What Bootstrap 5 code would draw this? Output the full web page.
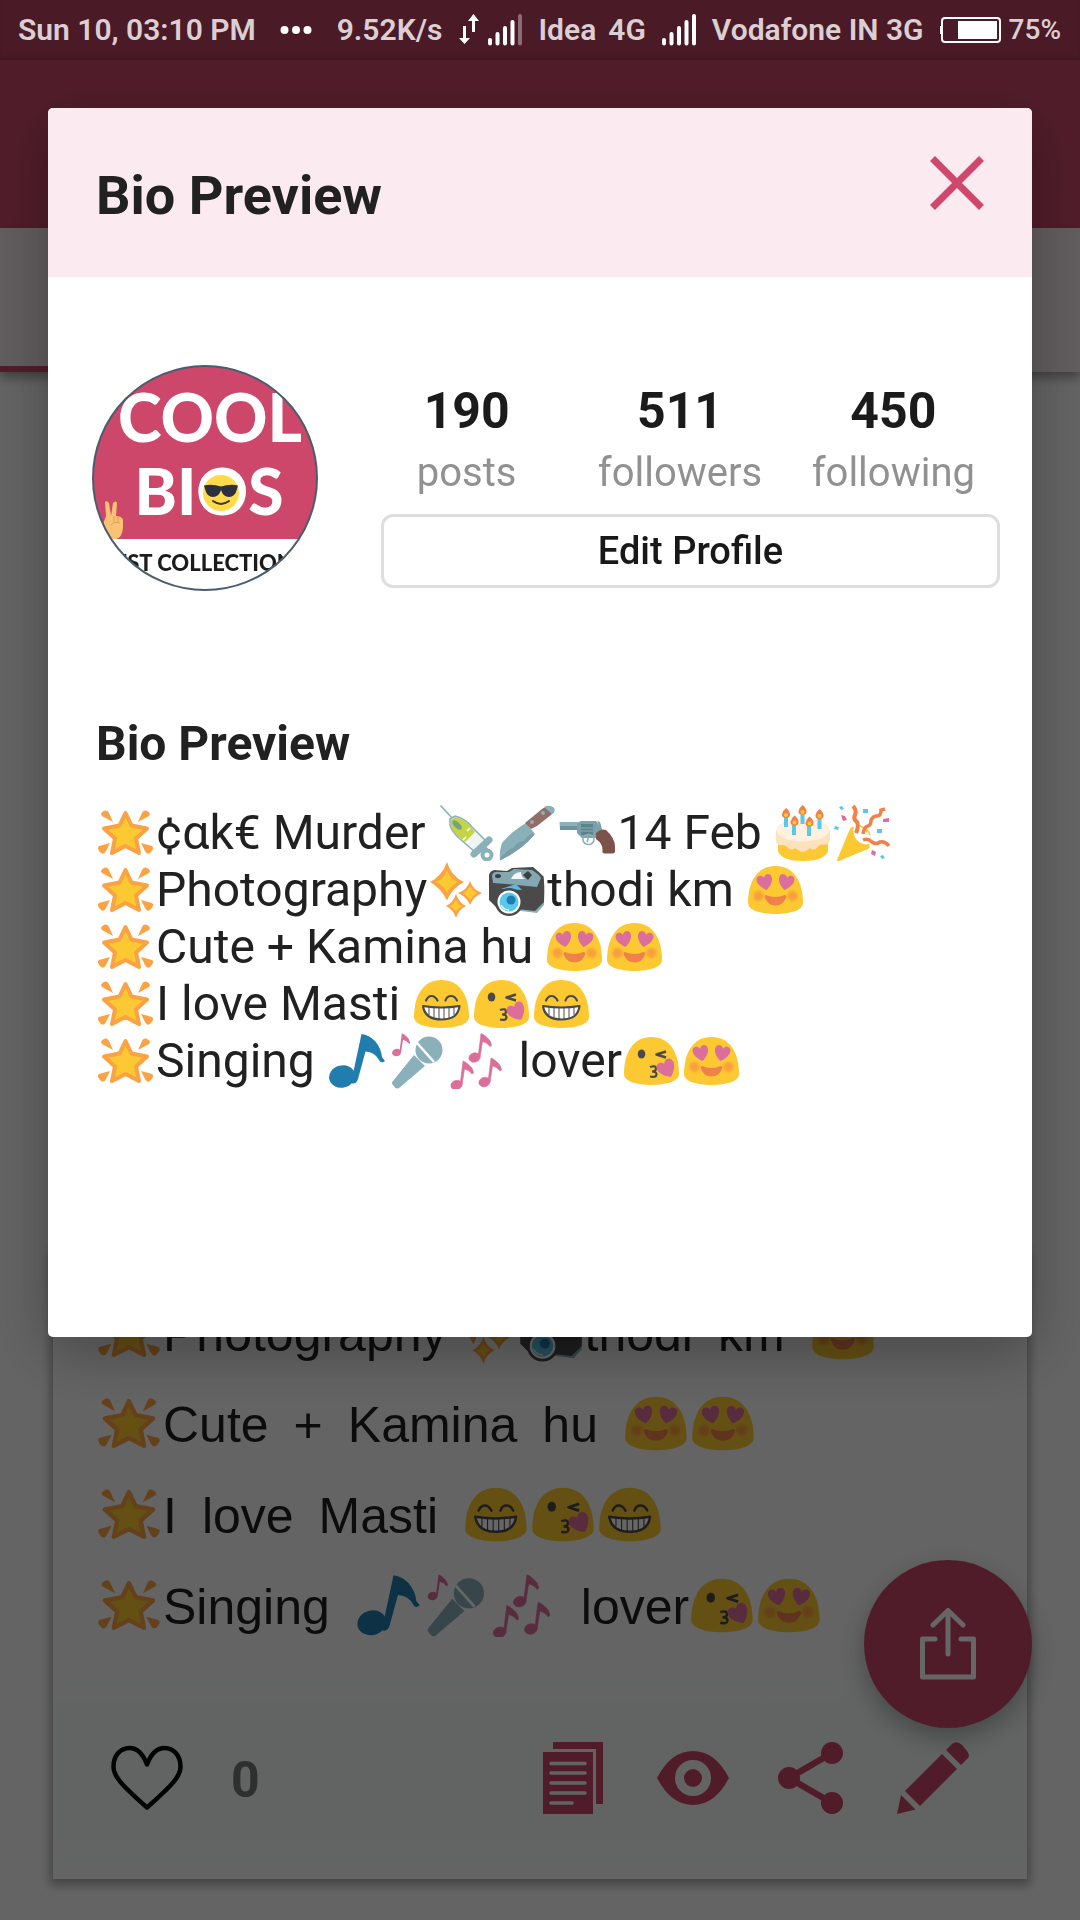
<!DOCTYPE html>
<html lang="en">
<head>
<meta charset="utf-8">
<meta name="viewport" content="width=device-width, initial-scale=1">
<title>Bio Preview</title>
<link href="https://cdn.jsdelivr.net/npm/bootstrap@5.3.0/dist/css/bootstrap.min.css" rel="stylesheet">
<style>
  :root { --brand: #cb486a; }
  body { font-family: Roboto, sans-serif; background: #fafafa; color: #212121; }
  .status-bar { position: relative; z-index: 1060; height: 60px; padding: 0 19px 0 18px; background: #4a1b26; color: #dccfd3;
    font-size: 30px; line-height: 60px; font-weight: 600; white-space: nowrap; box-shadow: inset 0 -3px 3px rgba(0,0,0,.15); }
  .status-bar .charge { font-size: 28px; font-weight: 500; }
  .app-bar { height: 168px; background: var(--brand); }
  .tab-strip { height: 144px; background: #f5e8ec; box-shadow: 0 6px 10px rgba(0,0,0,.35); }
  .tab-on { border-bottom: 6px solid var(--brand); }
  .bio-card { margin: 0 53px 41px; background: #fafafa; box-shadow: 0 3px 9px 3px rgba(0,0,0,.32); }
  .bio-lines { padding: 40px 43px 14px; font: 50px/91px "Liberation Sans", sans-serif; color: #1f1f1f; }
  .bio-foot { background: linear-gradient(#fafafa, #f6faf8 40px, #f6faf8 170px, #fafafa); padding: 75px 58px 63px; }
  .bio-foot .likes { font-size: 50px; line-height: 72px; font-weight: 700; color: #737575; padding-top: 2px; }
  .icon-btn { border: 0; background: none; padding: 0; color: var(--brand); line-height: 0; }
  .emo { width: 60px; height: 56px; vertical-align: -12px; }
  .bio-lines .emo { width: 67px; height: 63px; vertical-align: -13px; }
  .fab { position: absolute; right: 48px; bottom: 192px; width: 168px; height: 168px; background: var(--brand); box-shadow: 0 10px 24px rgba(40,50,60,.35); }
  .modal-backdrop.show { opacity: .6; }
  .preview-dialog { max-width: none; margin: 108px 48px 0; }
  .preview-dialog .modal-content { border: 0; border-radius: 5px; color: #212121; box-shadow: 0 14px 60px rgba(0,0,0,.3); overflow: visible; }
  .preview-dialog .modal-header { background: #fbebf0; border: 0; border-radius: 5px 5px 0 0; padding: 48px 48px 49px; }
  .preview-dialog .modal-title { font-size: 54px; line-height: 64px; font-weight: 700; padding-top: 8px; }
  .preview-dialog .modal-body { padding: 88px 32px 248px 44px; }
  .profile { gap: 42px; }
  .avatar { width: 226px; height: 226px; }
  .stat b { display: block; font-size: 50px; line-height: 60px; font-weight: 700; color: #1b1b1b; margin-bottom: 8px; }
  .stat span { display: block; font-size: 40px; line-height: 48px; color: #919191; }
  .edit-btn { margin: 17px 0 3px 21px; height: 74px; border: 3px solid #dedede; border-radius: 12px; background: #fff; font-size: 38px; line-height: 1; font-weight: 500; color: #181818; }
  .bio-text { padding: 124px 0 0 4px; font-size: 48px; line-height: 57px; }
  .bio-text h2 { font-size: 48px; line-height: 57px; font-weight: 700; margin-bottom: 32px; }
</style>
</head>
<body>

<svg width="0" height="0" class="position-absolute" aria-hidden="true">
  <defs>
    <radialGradient id="blush"><stop offset="0" stop-color="#f79a3e"/><stop offset=".5" stop-color="#f99f3d" stop-opacity=".8"/><stop offset="1" stop-color="#fcc932" stop-opacity="0"/></radialGradient>
    <path id="blob" d="M2 41C2 20 11 4 29.500 4S57 20 57 41C57 48 45 52 29.500 52S2 48 2 41Z" fill="#fcc932"/>
    <path id="heart" d="M0 7C-5 4-8-1-7-4.500C-6-8-1.500-8 0-4.500C1.500-8 6-8 7-4.500C8-1 5 4 0 7Z" fill="#dc6e9b"/>
    <g id="quaver"><ellipse cx="-5.500" cy="0" rx="5.700" ry="4.600" transform="rotate(-15 -5.500 0)"/><path d="M-2 0L1-24Q4-23 7-20Q11-17 11.500-12L10-11Q7-15 2.500-16L0 0Z"/></g>
    <symbol id="e-star" viewBox="0 0 60 56">
      <g fill="#fba244"><path d="M17 17L6 11Q3 8 9 5.500Q12 5 13 8Z"/><path d="M42 17L46 8Q47 5 50 5.500Q56 8 53 11Z"/><path d="M14 38L3 41Q0 43 5 48Q8 50 10 46Z"/><path d="M45 38L56 41Q59 43 54 48Q51 50 49 46Z"/></g>
      <path d="M29.500 8L35.500 20.500L51 23.500L40 33.500L43 48L29.500 41L16 48L19 33.500L8 23.500L23.500 20.500Z" fill="#fcc932" stroke="#fba244" stroke-width="4" stroke-linejoin="round"/>
    </symbol>
    <symbol id="e-syringe" viewBox="0 0 60 56">
      <path d="M2.500.5L15 14" stroke="#8ab0b9" stroke-width="1.600"/>
      <path d="M12 14L17 11Q28 14 34 22L48 36L37 47L22 34Q14 27 12 20Z" fill="#eef4f4" stroke="#8ab0b9" stroke-width="1.500"/>
      <path d="M13 15L17 12Q28 15 33 22L37 27L27 37L21 32Q15 27 13 21Z" fill="#c3d544"/>
      <ellipse cx="19" cy="20" rx="6" ry="3" transform="rotate(45 19 20)" fill="#7aa37c"/>
      <path d="M25 35l3-3M29 38l3-3M33 42l3-3M29 26l3-3" stroke="#fff" stroke-width="1.500"/>
      <path d="M51 35L36 49" stroke="#8ab0b9" stroke-width="7" stroke-linecap="round"/>
      <path d="M43 42L50 49" stroke="#8ab0b9" stroke-width="8"/>
      <circle cx="49" cy="50" r="4.500" fill="#fff" stroke="#8ab0b9" stroke-width="4"/>
    </symbol>
    <symbol id="e-knife" viewBox="0 0 60 56">
      <path d="M28 18L37 29Q25 44 2 55.500Q1 46 4 38Q14 26 28 18Z" fill="#8ab0b9"/>
      <path d="M36 30Q25 44 2 55.500Q3 50 7 49Q10 44 15 43Q20 36 26 36Q29 31 34 28Z" fill="#7a9ea7"/>
      <path d="M27 18L44 4Q50-1 56 3Q57 7 53 10L39 21L33 24Z" fill="#936d67"/>
      <path d="M46 2Q51-1 56 3Q58 7 54 9Z" fill="#8ab0b9"/>
      <circle cx="34" cy="17" r="2" fill="#8ab0b9"/><circle cx="45" cy="8" r="2" fill="#8ab0b9"/>
    </symbol>
    <symbol id="e-gun" viewBox="0 0 60 56">
      <path d="M1.500 17H20V25H2Z" fill="#8ab0b9"/><path d="M2 21H20V25H2Z" fill="#6f949d"/>
      <path d="M19 18L23 16H38L41 20L39 16L42 17L44 24L45 28L38 33H24L19 28Z" fill="#7ba1ab"/>
      <rect x="23" y="19" width="12" height="11" fill="#5d838d"/><path d="M23 23h12M23 26h12" stroke="#7ba1ab" stroke-width="1.500"/>
      <ellipse cx="30.500" cy="34.500" rx="5.500" ry="5" fill="none" stroke="#8ab0b9" stroke-width="1.600"/><path d="M29 31q2 3 0 6" stroke="#8ab0b9" fill="none" stroke-width="1.500"/>
      <path d="M38 28Q43 23 48 25Q57 33 57 42V47Q56 48.500 54 48.500H46Q44 48 44.500 45Q45 39 38 34Z" fill="#7b534b"/>
    </symbol>
    <symbol id="e-cake" viewBox="0 0 60 56">
      <path d="M4 34V46Q7 56 29 56T54 46V34Z" fill="#fcc932"/>
      <path d="M2 25V36Q3 41 8 40Q12 40 14 43Q18 46 21 43Q25 46 29 47Q33 46 36 43Q39 46 43 43Q46 38 50 40Q56 39 56 34V25Z" fill="#fde2bd"/>
      <ellipse cx="29" cy="25" rx="26.500" ry="11.500" fill="#fff1e0"/>
      <path d="M12 11V22M20 20V30M28.500 10V19M35 20V31M45.500 13V24" stroke="#58c8ed" stroke-width="4"/>
      <g fill="#f0814b"><path id="flame" d="M12 3Q16 6 16 9.500Q16 13 12 13Q8 13 8 9.500Q9 5 12 3Z"/><use href="#flame" x="8.500" y="7.500"/><use href="#flame" x="16.500" y="-3"/><use href="#flame" x="23.500" y="8.500"/><use href="#flame" x="33.500" y="1"/></g>
      <g fill="#fcc932"><circle cx="12" cy="10" r="2"/><circle cx="20.500" cy="17.500" r="2"/><circle cx="28.500" cy="7" r="2"/><circle cx="35.500" cy="18.500" r="2"/><circle cx="45.500" cy="11" r="2"/></g>
    </symbol>
    <symbol id="e-party" viewBox="0 0 60 56">
      <path d="M3 55Q3 57 5 56L34 44Q37 42 35 39Q28 41 22 34Q18 28 20 22Q17 21 15.500 25Z" fill="#fcc932"/>
      <path d="M28 22Q35 25 36 30M24 20Q30 22 33 27" stroke="#fcc932" stroke-width="1.500" fill="none"/>
      <g fill="none" stroke="#f0814b" stroke-width="4"><path d="M19 1Q23 5 21 10Q19 14 23 17Q25 21 22 28"/><path d="M29 29Q30 22 34 21Q37 20 37 15Q39 11 43 11Q47 11 47 5L51 4" stroke-width="3.500"/><path d="M29 35Q34 33 38 37Q42 40 46 37Q51 36 55 41" stroke-width="3.500"/></g>
      <g fill="#58c8ed"><path d="M5 2l3-1 2 3-3 1zM29 4l5 0 0 4-5 0zM1 21l4 1-1 3-4-1zM43 24h5v4h-5zM46 51l3-1 2 3-3 1z"/></g>
      <g fill="#dc6e9b"><path d="M7 10l4 1 2 4-4 1zM49 14l6-1 0 4-6 0zM38 45l4 2-1 4-4-2z"/></g>
    </symbol>
    <symbol id="e-sparkle" viewBox="0 0 60 56">
      <g fill="#fba244"><path d="M20 0Q24 14 37 20Q25 26 20 38.500Q14 26 3 20Q15 14 20 0Z"/><path d="M43 19Q46 28 55 31Q46 35 43 43Q40 35 31 31Q40 28 43 19Z"/><path d="M29 32Q32 41 39 44Q32 47 29 56Q26 47 19 44Q26 41 29 32Z"/></g>
      <g fill="#fcc932"><path d="M20 8Q23 17 31 20Q23 24 20 31Q17 24 9 20Q17 17 20 8Z"/><path d="M43 24Q45 29 50 31Q45 34 43 38Q41 34 36 31Q41 29 43 24Z"/><path d="M29 38Q31 42 35 44Q31 46 29 50Q27 46 23 44Q27 42 29 38Z"/></g>
    </symbol>
    <symbol id="e-camera" viewBox="0 0 60 56">
      <path d="M3 38L10 46L50 51L57 43V14H3Z" fill="#8ab0b9"/>
      <path d="M2 38V13Q3 9 7 8L20 9L25 6L46 5Q52 10 56 14Q58 20 57 40L48 49L30 47L10 46Z" fill="#4a4a4a"/>
      <path d="M5 13Q7 9 12 10L22 10L27 7L45 8Q53 13 54 16L50 25L20 22L6 21Z" fill="#83a8b1"/>
      <ellipse cx="11" cy="14" rx="3" ry="2" fill="#3e3e3e"/><path d="M24 17Q27 10 34 10Q34 15 38 17Z" fill="#f4f8f8"/><path d="M36 13l5-4 4 4-4 5z" fill="#3e3e3e"/>
      <path d="M14 27L29 22L35 28Z" fill="#60b6d6"/>
      <circle cx="22" cy="40" r="14" fill="#4a4a4a"/><circle cx="22" cy="40" r="11.500" fill="#fff"/><circle cx="22" cy="40" r="9.500" fill="#58c8ed"/><circle cx="24" cy="38" r="4.500" fill="#217dae"/><path d="M14 43q3 5 8 5" stroke="#fff" stroke-width="1.300" fill="none"/>
    </symbol>
    <symbol id="e-love" viewBox="0 0 60 56">
      <use href="#blob"/><circle cx="12.500" cy="34" r="8" fill="url(#blush)"/><circle cx="46.500" cy="34" r="8" fill="url(#blush)"/>
      <use href="#heart" transform="translate(19 20.500) rotate(-12) scale(1.080)"/><use href="#heart" transform="translate(40 20.500) rotate(12) scale(1.080)"/>
      <path d="M20 33Q29.500 37 38.500 33Q41 33 40 36Q37 43.500 29.500 43.500T19 36Q18 33 20 33Z" fill="#f0814b"/>
    </symbol>
    <symbol id="e-grin" viewBox="0 0 60 56">
      <use href="#blob"/><g fill="none" stroke="#4a4a4a" stroke-width="2.200" stroke-linecap="round"><path d="M14 24.500Q16 20 19.500 20T25.500 24.500M33.500 24.500Q35 20 39 20T45 24.500"/></g>
      <path d="M11 30Q29.500 33 47.500 30Q46 43.500 29.500 43.500T11 30Z" fill="#fff" stroke="#4a4a4a" stroke-width="2.200" stroke-linejoin="round"/>
      <path d="M17 31V39M22 31.500V42M27 32V43M32 32V43M37 31.500V42M42 31V39" stroke="#4a4a4a" stroke-width="1"/>
    </symbol>
    <symbol id="e-kiss" viewBox="0 0 60 56">
      <use href="#blob"/><ellipse cx="19.500" cy="21" rx="3.800" ry="4.500" fill="#4a4a4a"/>
      <path d="M44 18.500L34.500 21.500L44 24.500" fill="none" stroke="#4a4a4a" stroke-width="2.500" stroke-linejoin="round"/>
      <path d="M28 34Q34 32 34 35.500Q34 38.500 30 38.500Q34.500 38.500 34.500 41.500Q34 45 28 43.500" fill="none" stroke="#4a4a4a" stroke-width="2.200"/>
      <use href="#heart" transform="translate(45 36) rotate(-28) scale(1.250)"/>
    </symbol>
    <symbol id="e-note" viewBox="0 0 60 56">
      <ellipse cx="15" cy="43.500" rx="13" ry="11" transform="rotate(-15 15 43.500)" fill="#217dae"/><path d="M34.500 1Q42 2 48 8Q54 15 55 24L58 28Q54 31 52 27Q48 19 38.500 18.500L31 46Q29 52 24 50Z" fill="#217dae"/>
    </symbol>
    <symbol id="e-mic" viewBox="0 0 60 56">
      <path d="M27 22L38 33L12 55Q9 57 6 52Q4 50 6 48Z" fill="#8ab0b9"/><circle cx="42" cy="17" r="13.500" fill="#8ab0b9"/><path d="M30 10L47 29" stroke="#fff" stroke-width="2.500"/>
      <use href="#quaver" transform="translate(14 19.500) scale(.8)" fill="#dc6e9b"/>
    </symbol>
    <symbol id="e-notes" viewBox="0 0 60 56">
      <g fill="#dc6e9b" stroke="#dc6e9b" stroke-width=".6"><use href="#quaver" transform="translate(33 24.500)"/><use href="#quaver" transform="translate(15 52)"/><use href="#quaver" transform="translate(43 49)"/></g>
    </symbol>
    <symbol id="i-bars" viewBox="0 0 34 32"><g stroke="currentColor" stroke-width="4" stroke-linecap="round"><path d="M2 26V29.500M9.500 20V29.500M17 14V29.500M24.500 8V29.500"/></g></symbol>
  </defs>
</svg>

<div class="position-relative d-flex flex-column min-vh-100">
  <header class="status-bar d-flex align-items-center">
    <span>Sun 10, 03:10 PM</span>
    <svg class="ms-4" width="32" height="10" viewBox="0 0 32 10" fill="#fff"><circle cx="4.500" cy="5" r="4"/><circle cx="16" cy="5" r="4"/><circle cx="27.500" cy="5" r="4"/></svg>
    <span class="ms-auto">9.52K/s</span>
    <svg class="ms-3" width="22" height="32" viewBox="0 0 22 32" fill="#fff"><path d="M5 12h3v12h4l-5.500 6L1 24h4zM14 18h3V7h4L15.500 0 10 7h4z"/></svg>
    <svg class="ms-2 text-white" width="34" height="32"><use href="#i-bars"/><path d="M32 2V29.500" stroke="#8b6c74" stroke-width="4" stroke-linecap="round"/></svg>
    <span class="ms-3">Idea</span><span class="ms-2 ps-1">4G</span>
    <svg class="ms-3 text-white" width="34" height="32"><use href="#i-bars"/><path d="M32 2V29.500" stroke="#fff" stroke-width="4" stroke-linecap="round"/></svg>
    <span class="ms-3">Vodafone IN 3G</span>
    <svg class="ms-3" width="61" height="26" viewBox="0 0 61 26"><rect x="2" y="1" width="58" height="24" rx="3" fill="none" stroke="#fff" stroke-width="2"/><path d="M0 9h3v8H0zM18 4h39v18H18z" fill="#fff"/></svg>
    <span class="charge ms-2">75%</span>
  </header>
  <nav>
    <div class="app-bar"></div>
    <div class="tab-strip d-flex"><div class="tab-on col-4"></div></div>
  </nav>

  <main class="flex-grow-1 d-flex flex-column justify-content-end">
    <article class="bio-card">
      <div class="bio-lines">
        <div><svg class="emo"><use href="#e-star"/></svg>Photography<svg class="emo ms-1"><use href="#e-sparkle"/></svg><svg class="emo"><use href="#e-camera"/></svg>thodi&ensp;km&ensp;<svg class="emo"><use href="#e-love"/></svg></div>
        <div><svg class="emo"><use href="#e-star"/></svg>Cute&ensp;+&ensp;Kamina&ensp;hu&ensp;<svg class="emo"><use href="#e-love"/></svg><svg class="emo"><use href="#e-love"/></svg></div>
        <div><svg class="emo"><use href="#e-star"/></svg>I&ensp;love&ensp;Masti&ensp;<svg class="emo"><use href="#e-grin"/></svg><svg class="emo"><use href="#e-kiss"/></svg><svg class="emo"><use href="#e-grin"/></svg></div>
        <div><svg class="emo"><use href="#e-star"/></svg>Singing&ensp;<svg class="emo"><use href="#e-note"/></svg><svg class="emo"><use href="#e-mic"/></svg><svg class="emo"><use href="#e-notes"/></svg>&ensp;lover<svg class="emo"><use href="#e-kiss"/></svg><svg class="emo"><use href="#e-love"/></svg></div>
      </div>
      <div class="bio-foot d-flex align-items-start">
        <button class="icon-btn" type="button" aria-label="Like"><svg width="72" height="72" viewBox="0 0 72 72"><path d="M36 22.500C32 12 26 6 18.500 6C9 6 2.500 14 2.500 24.500C2.500 34 9 41.500 36 65.500C63 41.500 69.500 34 69.500 24.500C69.500 14 63 6 53.500 6C46 6 40 12 36 22.500Z" fill="none" stroke="#000" stroke-width="4.500" stroke-linejoin="round"/></svg></button>
        <span class="likes ms-5">0</span>
        <div class="d-flex gap-5 ms-auto">
          <button class="icon-btn" type="button" aria-label="Copy"><svg width="72" height="72" viewBox="0 0 72 72" fill="currentColor"><path d="M16 0H66V62H59V7H16Z"/><path d="M6 10H56V72H6Z"/><path d="M14 21.500H48M14 31H48M14 41H48M14 51H48M14 61H35" stroke="#f6faf8" stroke-width="3.500" stroke-linecap="round"/></svg></button>
          <button class="icon-btn" type="button" aria-label="View"><svg width="72" height="72" viewBox="0 0 72 72"><path d="M0 36Q14 9 36 9T72 36Q58 63 36 63T0 36Z" fill="currentColor"/><circle cx="36" cy="36" r="18" fill="#f6faf8"/><circle cx="36" cy="36" r="9" fill="currentColor"/></svg></button>
          <button class="icon-btn" type="button" aria-label="Share"><svg width="72" height="72" viewBox="0 0 72 72" fill="currentColor"><path d="M55 11L12 36L55 61" fill="none" stroke="currentColor" stroke-width="6.500"/><circle cx="55" cy="11" r="11"/><circle cx="12" cy="36" r="11"/><circle cx="55" cy="61" r="11"/></svg></button>
          <button class="icon-btn" type="button" aria-label="Edit"><svg width="72" height="72" viewBox="0 0 72 72" fill="currentColor"><path d="M49 8L55 2Q60-2 65 3L70 9Q74 14 70 17L64 23Z"/><path d="M45 12L60 27L23 64L8 49Z"/><path d="M4 53L18.500 67.500L0 72Z"/></svg></button>
        </div>
      </div>
    </article>
  </main>
  <button class="fab btn rounded-circle border-0 p-0" type="button" aria-label="Send"><svg width="58" height="72" viewBox="0 0 58 72" fill="none" stroke="#fff" stroke-width="5" stroke-linecap="round" stroke-linejoin="round"><path d="M29 46V3M14 17L29 2.500L44 17M16 31H3.500V69H54.500V31H42"/></svg></button>
</div>

<div class="modal-backdrop show"></div>

<div class="modal d-block" tabindex="-1" role="dialog" aria-labelledby="dlg-title">
  <div class="modal-dialog preview-dialog">
    <div class="modal-content">
      <div class="modal-header align-items-start">
        <h1 class="modal-title" id="dlg-title">Bio Preview</h1>
        <button class="icon-btn" type="button" aria-label="Close"><svg width="54" height="54" viewBox="0 0 54 54"><path d="M2.500 2.500L51.500 51.500M51.500 2.500L2.500 51.500" stroke="#cf486b" stroke-width="7"/></svg></button>
      </div>
      <div class="modal-body">
        <section class="profile d-flex align-items-end">
          <svg class="avatar flex-shrink-0" viewBox="0 0 226 226">
            <clipPath id="round"><circle cx="113" cy="113" r="112"/></clipPath>
            <g clip-path="url(#round)">
              <path d="M0 0H226V226H0Z" fill="#fff"/><path d="M0 0H226V174H0Z" fill="#cd476a"/>
              <g font-family="Lato, sans-serif" font-weight="900" fill="#fff" text-anchor="middle"><text x="118" y="77" font-size="66">COOL</text><text x="117" y="150" font-size="64">BIOS</text></g>
              <text x="8" y="206" font-family="Lato, sans-serif" font-weight="900" font-size="22" fill="#1c1c1c">BEST COLLECTION</text>
              <circle cx="129" cy="128" r="22" fill="#fff"/><circle cx="129" cy="128" r="18" fill="#ffdb4a"/>
              <path d="M112 120.500Q120 118.500 129 121.500Q138 118.500 146 120.500L145 124Q143 132 137 132Q131 132 129 125Q127 132 121 132Q115 132 113 124Z" fill="#2b3140"/><path d="M121 136q8 6 16 0" stroke="#3b3427" stroke-width="2" fill="none" stroke-linecap="round"/>
              <path d="M13 137q2-2 4 1l2 13 2-13q3-3 4 0l-1 13q6 0 7 4v8q-1 10-7 11H19q-7-4-8-15l3-8Z" fill="#fbc275"/><path d="M19 160q3-4 9-2M22 151v6M26 151v6" stroke="#e09d50" stroke-width="1" fill="none"/>
            </g>
            <circle cx="113" cy="113" r="112" fill="none" stroke="#4a5d70" stroke-width="2"/>
          </svg>
          <div class="flex-grow-1 d-flex flex-column">
            <div class="row g-0 text-center">
              <div class="col stat"><b>190</b><span>posts</span></div>
              <div class="col stat"><b>511</b><span>followers</span></div>
              <div class="col stat"><b>450</b><span>following</span></div>
            </div>
            <button class="edit-btn" type="button">Edit Profile</button>
          </div>
        </section>
        <section class="bio-text">
          <h2>Bio Preview</h2>
          <div><svg class="emo"><use href="#e-star"/></svg>¢αk€ Murder <svg class="emo"><use href="#e-syringe"/></svg><svg class="emo"><use href="#e-knife"/></svg><svg class="emo"><use href="#e-gun"/></svg>14 Feb <svg class="emo"><use href="#e-cake"/></svg><svg class="emo"><use href="#e-party"/></svg></div>
          <div><svg class="emo"><use href="#e-star"/></svg>Photography<svg class="emo"><use href="#e-sparkle"/></svg><svg class="emo"><use href="#e-camera"/></svg>thodi km <svg class="emo"><use href="#e-love"/></svg></div>
          <div><svg class="emo"><use href="#e-star"/></svg>Cute + Kamina hu <svg class="emo"><use href="#e-love"/></svg><svg class="emo"><use href="#e-love"/></svg></div>
          <div><svg class="emo"><use href="#e-star"/></svg>I love Masti <svg class="emo"><use href="#e-grin"/></svg><svg class="emo"><use href="#e-kiss"/></svg><svg class="emo"><use href="#e-grin"/></svg></div>
          <div><svg class="emo"><use href="#e-star"/></svg>Singing <svg class="emo"><use href="#e-note"/></svg><svg class="emo"><use href="#e-mic"/></svg><svg class="emo"><use href="#e-notes"/></svg> lover<svg class="emo"><use href="#e-kiss"/></svg><svg class="emo"><use href="#e-love"/></svg></div>
        </section>
      </div>
    </div>
  </div>
</div>
<script src="https://cdn.jsdelivr.net/npm/bootstrap@5.3.0/dist/js/bootstrap.bundle.min.js"></script>
</body>
</html>
